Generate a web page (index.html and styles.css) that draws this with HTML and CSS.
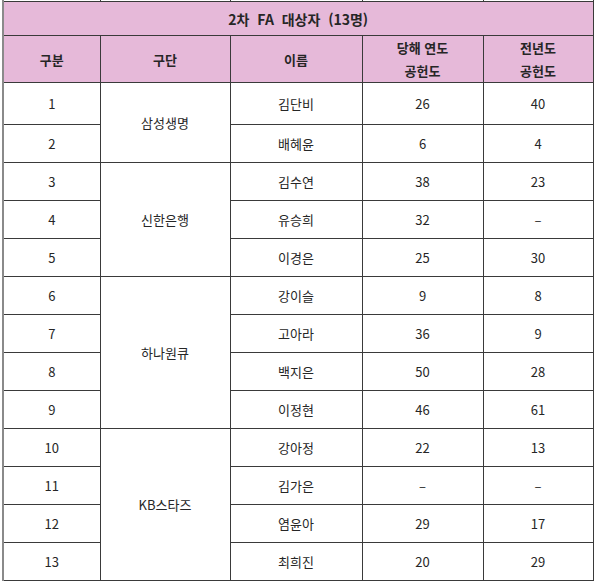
FILE: index.html
```html
<!DOCTYPE html>
<html lang="ko">
<head>
<meta charset="utf-8">
<link rel="stylesheet" href="styles.css">
</head>
<body>
<table class="fa">
  <colgroup>
    <col class="c1"><col class="c2"><col class="c3"><col class="c4"><col class="c5">
  </colgroup>
  <tr class="prev"><td></td><td></td><td></td><td></td><td></td></tr>
  <tr class="title"><th colspan="5">2차&nbsp; FA&nbsp; 대상자&nbsp; (13명)</th></tr>
  <tr class="head"><th>구분</th><th>구단</th><th>이름</th><th>당해 연도<br>공헌도</th><th>전년도<br>공헌도</th></tr>
  <tr class="first"><td>1</td><td rowspan="2">삼성생명</td><td>김단비</td><td>26</td><td>40</td></tr>
  <tr><td>2</td><td>배혜윤</td><td>6</td><td>4</td></tr>
  <tr><td>3</td><td rowspan="3">신한은행</td><td>김수연</td><td>38</td><td>23</td></tr>
  <tr><td>4</td><td>유승희</td><td>32</td><td>–</td></tr>
  <tr><td>5</td><td>이경은</td><td>25</td><td>30</td></tr>
  <tr><td>6</td><td rowspan="4">하나원큐</td><td>강이슬</td><td>9</td><td>8</td></tr>
  <tr><td>7</td><td>고아라</td><td>36</td><td>9</td></tr>
  <tr><td>8</td><td>백지은</td><td>50</td><td>28</td></tr>
  <tr><td>9</td><td>이정현</td><td>46</td><td>61</td></tr>
  <tr><td>10</td><td rowspan="4">KB스타즈</td><td>강아정</td><td>22</td><td>13</td></tr>
  <tr><td>11</td><td>김가은</td><td>–</td><td>–</td></tr>
  <tr><td>12</td><td>염윤아</td><td>29</td><td>17</td></tr>
  <tr><td>13</td><td>최희진</td><td>20</td><td>29</td></tr>
</table>
</body>
</html>
```
FILE: styles.css
```css
html, body {
  margin: 0;
  padding: 0;
  background: #ffffff;
}

body {
  overflow: hidden;
}

.fa {
  margin: -20px 0 0 2px;
  width: 590px;
  border-collapse: collapse;
  table-layout: fixed;
  font-family: "Noto Sans CJK KR", "Noto Sans", sans-serif;
  font-size: 13px;
  color: #262626;
  border-left: 2px solid #8a8a8a;
}

.c1 { width: 97px; }
.c2 { width: 130px; }
.c3 { width: 132px; }
.c4 { width: 121px; }
.c5 { width: 110px; }

.fa td,
.fa th {
  border: 1px solid #3a3a3a;
  text-align: center;
  vertical-align: middle;
  padding: 0;
}

.fa td {
  height: 37px;
  font-weight: 400;
}

.fa .first td {
  height: 41px;
}

.fa .prev td {
  height: 20px;
}

.fa th {
  background: #e6b9d9;
  font-weight: 700;
  color: #262626;
}

.fa .title th {
  height: 33px;
  font-size: 14px;
}

.fa .head th {
  height: 46px;
  line-height: 23px;
  font-size: 13px;
}
```
